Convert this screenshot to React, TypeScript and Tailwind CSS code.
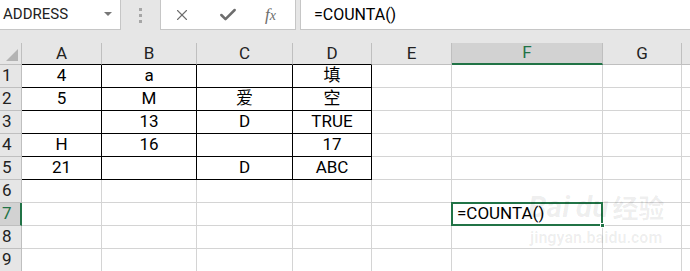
import { X, Check } from 'lucide-react'

const cols = [
  { key: 'A', w: 'w-[80px]' },
  { key: 'B', w: 'w-[95px]' },
  { key: 'C', w: 'w-[96px]' },
  { key: 'D', w: 'w-[79px]' },
  { key: 'E', w: 'w-[80px]' },
  { key: 'F', w: 'w-[151px]' },
  { key: 'G', w: 'w-[79px]' },
]

const data: Record<number, string[]> = {
  1: ['4', 'a', '', '填'],
  2: ['5', 'M', '爱', '空'],
  3: ['', '13', 'D', 'TRUE'],
  4: ['H', '16', '', '17'],
  5: ['21', '', 'D', 'ABC'],
}

const font = { fontFamily: 'Roboto, "Noto Sans CJK SC", sans-serif' }

export default function App() {
  return (
    <div className="relative w-[690px] h-[271px] overflow-hidden bg-[#e6e6e6] text-black" style={font}>
      {/* Formula bar */}
      <div className="flex h-[30px] items-stretch">
        <div className="w-[121px] bg-white border-r border-b border-[#c6c6c6] flex items-center justify-between pl-[3px] pr-[8px] text-[15px] text-[#222]">
          <span>ADDRESS</span>
          <svg width="8" height="5" viewBox="0 0 8 5"><path d="M0 0h8L4 4z" fill="#777" /></svg>
        </div>
        <div className="w-[39px] flex items-center justify-center">
          <div className="flex flex-col gap-[3px]">
            <div className="w-[3px] h-[3px] bg-[#a6a6a6]" />
            <div className="w-[3px] h-[3px] bg-[#a6a6a6]" />
            <div className="w-[3px] h-[3px] bg-[#a6a6a6]" />
          </div>
        </div>
        <div className="w-[136px] bg-white border-x border-b border-[#c6c6c6] flex items-center pl-[12px]">
          <X size={18} strokeWidth={1.5} color="#6d6d6d" />
          <Check size={20} strokeWidth={3} color="#6d6d6d" className="ml-[27px]" />
          <span className="ml-[27px] text-[#6d6d6d] italic text-[17px]" style={{ fontFamily: '"Liberation Serif", serif' }}>
            f<span className="text-[14px]">x</span>
          </span>
        </div>
        <div className="w-[4px]" />
        <div className="flex-1 bg-white border-l border-b border-[#c6c6c6] flex items-center pl-[13px] text-[16px]">
          =COUNTA()
        </div>
      </div>
      <div className="h-[13px]" />

      {/* Column headers */}
      <div className="flex h-[22px]">
        <div className="w-[22px] relative border-r border-b border-[#bfbfbf]">
          <svg className="absolute right-[3px] bottom-[3px]" width="12" height="12" viewBox="0 0 12 12">
            <path d="M12 0V12H0z" fill="#b3b3b3" />
          </svg>
        </div>
        {cols.map((c, i) => {
          const sel = c.key === 'F'
          return (
            <div
              key={c.key}
              className={`${c.w} flex items-center justify-center text-[17px] border-r ${
                sel
                  ? 'bg-[#d2d2d2] text-[#217346] border-b-2 border-b-[#217346] border-r-[#bfbfbf]'
                  : i < 4
                  ? 'border-b border-b-black border-r-[#bfbfbf] text-[#222]'
                  : 'border-b border-[#bfbfbf] text-[#222]'
              }`}
            >
              {c.key}
            </div>
          )
        })}
        <div className="flex-1 border-b border-[#bfbfbf]" />
      </div>

      {/* Rows */}
      {[1, 2, 3, 4, 5, 6, 7, 8, 9].map((r) => {
        const selRow = r === 7
        return (
          <div key={r} className="flex h-[23px] bg-white">
            <div
              className={`w-[22px] flex items-center pl-[2px] text-[17px] border-b border-[#bfbfbf] ${
                selRow
                  ? 'bg-[#d2d2d2] text-[#217346] border-r-2 border-r-[#217346]'
                  : 'bg-[#e6e6e6] text-[#222] border-r'
              }`}
            >
              {r}
            </div>
            {cols.map((c, i) => {
              const inTable = r <= 5 && i < 4
              const val = inTable ? data[r][i] : ''
              const selCell = selRow && c.key === 'F'
              if (selCell) {
                return (
                  <div key={c.key} className={`${c.w} relative border-r border-b border-[#d4d4d4]`}>
                    <div className="absolute -left-[1px] -top-[1px] w-[152px] h-[24px] border-2 border-[#217346] flex items-center pl-[4px] text-[17px]">
                      =COUNTA()
                    </div>
                    <div className="absolute -right-[3px] -bottom-[3px] w-[5px] h-[5px] bg-[#217346] border border-white" />
                  </div>
                )
              }
              return (
                <div
                  key={c.key}
                  className={`${c.w} flex items-center justify-center text-[17px] border-r border-b ${
                    inTable ? 'border-black' : 'border-[#d4d4d4]'
                  }`}
                >
                  {val}
                </div>
              )
            })}
            <div className="flex-1 border-b border-[#d4d4d4]" />
          </div>
        )
      })}

      {/* Watermark */}
      <div className="absolute left-[528px] top-[192px] pointer-events-none select-none text-black/[0.07]">
        <div className="flex items-end font-bold leading-none">
          <span className="text-[30px] italic">Bai</span>
          <span className="text-[30px] italic ml-[6px]">du</span>
          <span className="text-[26px] ml-[4px]">经验</span>
        </div>
        <div className="text-[16px] font-bold leading-none mt-[8px] ml-[2px]">jingyan.baidu.com</div>
      </div>
    </div>
  )
}
